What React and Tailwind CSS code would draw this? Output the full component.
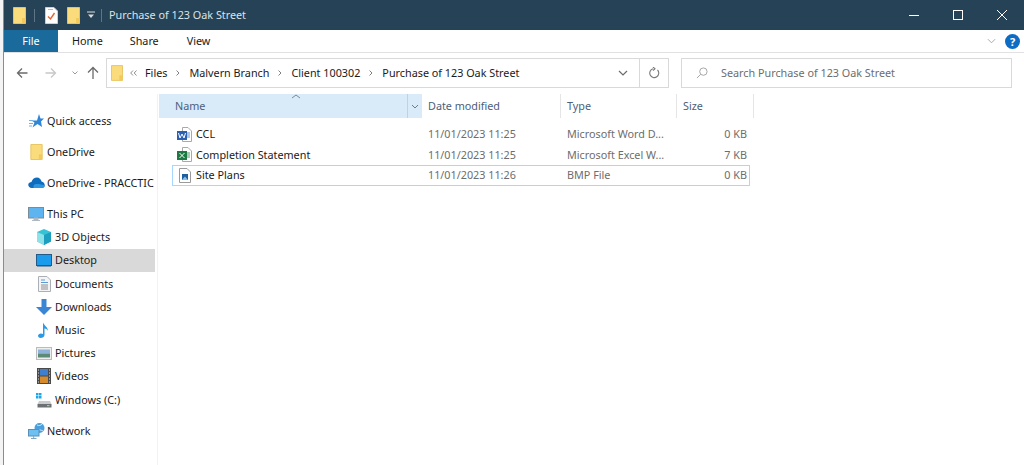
const font = { fontFamily: '"Noto Sans", sans-serif' };

function Folder({ className = "w-[13px] h-[17px]" }) {
  return (
    <svg viewBox="0 0 13 17" className={className}>
      <path d="M0.500 0.500H12.500V16.500H0.500Z" fill="#fbdc7c" stroke="#e6c25e" />
      <path d="M9 11H12.500V16.500H9Z" fill="#f3c95b" />
    </svg>
  );
}

function TaskIcon() {
  return (
    <svg viewBox="0 0 13 17" className="w-[13px] h-[17px]">
      <path d="M0.500 0.500H9L12.500 4V16.500H0.500Z" fill="#fff" stroke="#cfcfcf" />
      <path d="M3 9.500L5.500 12L9.500 6" fill="none" stroke="#e8642c" strokeWidth="1.400" />
      <path d="M3 2.500H8" stroke="#bbb" />
    </svg>
  );
}

function Star() {
  return (
    <svg viewBox="0 0 15 14" className="w-[15px] h-[14px]">
      <path d="M10 0L11.500 4.500H15L12 7.500L13 13L8.500 10L3.500 13.500L5.500 8.500L2.500 6.500H8Z" fill="#2f86d8" />
      <path d="M0 6.500H4M0 9.500H4M0 12H3" stroke="#6db2ea" />
    </svg>
  );
}

function Cloud() {
  return (
    <svg viewBox="0 0 18 12" className="w-[17px] h-[11px]">
      <path d="M4 12C1 12 0 10 0 8.500C0 6.500 2 5.500 3.500 5.500C4.500 2 7 0.500 9.500 0.500C12 0.500 14 2.500 14.500 5C16.500 5.500 18 7 18 9C18 11 16.500 12 15 12Z" fill="#0f6cbd" />
      <path d="M6 12C5 10 6 7.500 9 7.500C12 7.500 17 8 18 9.500C17.500 11 16.500 12 15 12Z" fill="#2c96e0" />
    </svg>
  );
}

function Monitor() {
  return (
    <svg viewBox="0 0 16 15" className="w-4 h-[15px]">
      <rect x="0.500" y="0.500" width="15" height="10.500" fill="#5db4ee" stroke="#7c8b98" />
      <path d="M6 11H10V13H6ZM4 13.500H12" fill="#aeb9c3" stroke="#aeb9c3" />
    </svg>
  );
}

function Cube() {
  return (
    <svg viewBox="0 0 16 16" className="w-4 h-4">
      <path d="M8 0L15 3V12.500L8 16L1 12.500V3Z" fill="#37c3d6" />
      <path d="M1 3L8 6V16L1 12.500Z" fill="#8de2e8" />
      <path d="M8 6L15 3V12.500L8 16Z" fill="#1d9fc0" />
    </svg>
  );
}

function DesktopIcon() {
  return (
    <svg viewBox="0 0 16 13" className="w-4 h-[13px]">
      <rect x="0.500" y="0.500" width="15" height="11" fill="#1a9bec" stroke="#245a88" />
      <rect x="1" y="11" width="14" height="1.500" fill="#245a88" />
    </svg>
  );
}

function Docs() {
  return (
    <svg viewBox="0 0 13 16" className="w-[13px] h-4">
      <path d="M0.500 0.500H9L12.500 4V15.500H0.500Z" fill="#f4f4f4" stroke="#aab0b6" />
      <path d="M3 4H7M3 6.500H10" stroke="#5a9ad5" />
      <path d="M3 9H10M3 11H10M3 13H10" stroke="#8a8f95" />
    </svg>
  );
}

function DownArrow() {
  return (
    <svg viewBox="0 0 16 16" className="w-4 h-4">
      <path d="M5.500 0H10.500V8H16L8 16L0 8H5.500Z" fill="#3b86d4" />
    </svg>
  );
}

function Note() {
  return (
    <svg viewBox="0 0 12 16" className="w-3 h-4">
      <path d="M5 0.500C6 3.500 10 5 10 9C9.500 7.500 8 6.500 6.500 6.500V13C6.500 15 4.500 16 2.500 16C1 16 0 15 0 13.800C0 12.500 1.500 11.500 3 11.500C3.800 11.500 4.500 11.700 5 12Z" fill="#2a9ae8" />
    </svg>
  );
}

function Pic() {
  return (
    <svg viewBox="0 0 16 13" className="w-4 h-[13px]">
      <rect x="0.500" y="0.500" width="15" height="12" fill="#eee" stroke="#bbb" />
      <rect x="2" y="2.500" width="12" height="4" fill="#8fb3d9" />
      <rect x="2" y="6.500" width="12" height="4" fill="#5d8a76" />
    </svg>
  );
}

function Film() {
  return (
    <svg viewBox="0 0 14 16" className="w-[14px] h-4">
      <rect width="14" height="16" fill="#4a4a4a" />
      <rect x="3" y="1" width="8" height="6.500" fill="#3f7fd0" />
      <rect x="3" y="8.500" width="8" height="6.500" fill="#d58a2b" />
      <path d="M1 2H2M1 5H2M1 8H2M1 11H2M1 14H2M12 2H13M12 5H13M12 8H13M12 11H13M12 14H13" stroke="#ddd" />
    </svg>
  );
}

function Drive() {
  return (
    <svg viewBox="0 0 16 16" className="w-4 h-4">
      <path d="M0 1H2.500V3.500H0ZM3 1H5.500V3.500H3ZM0 4H2.500V6.500H0ZM3 4H5.500V6.500H3Z" fill="#1ea7ea" />
      <path d="M3 9H14L15.500 12H1.500Z" fill="#c9ccce" />
      <rect x="1.500" y="12" width="14" height="3.500" fill="#6c7073" />
      <rect x="11" y="13" width="2.500" height="1.200" fill="#7fe07f" />
    </svg>
  );
}

function Net() {
  return (
    <svg viewBox="0 0 17 16" className="w-[17px] h-4">
      <circle cx="11.500" cy="5" r="5" fill="#4b9fdc" />
      <path d="M9 2C11 3 13 2.500 14 1M8 7C10 6 13 7 15 8" stroke="#cfe8fa" fill="none" />
      <rect x="0.500" y="6.500" width="10.500" height="6.500" fill="#6cc0f2" stroke="#5b8fb8" />
      <path d="M5.700 13V15.500M3 15.500H8.500" stroke="#7ea6c4" />
    </svg>
  );
}

function WordIcon() {
  return (
    <svg viewBox="0 0 15 15" className="w-[15px] h-[15px]">
      <path d="M5.500 0.500H11L14.500 4V14.500H5.500Z" fill="#fff" stroke="#a9a9a9" />
      <path d="M10 6H13M10 8H13M10 10H13" stroke="#5b8fd0" />
      <rect y="4" width="10" height="9" fill="#2b5fb3" />
      <path d="M1.500 6L3 11L5 7L7 11L8.500 6" stroke="#fff" fill="none" />
    </svg>
  );
}

function ExcelIcon() {
  return (
    <svg viewBox="0 0 15 15" className="w-[15px] h-[15px]">
      <path d="M5.500 0.500H11L14.500 4V14.500H5.500Z" fill="#fff" stroke="#a9a9a9" />
      <path d="M10 6H13M10 8H13M10 10H13" stroke="#4f9a6b" />
      <rect y="4" width="10" height="9" fill="#1d7a43" />
      <path d="M2.500 6L7.500 11M7.500 6L2.500 11" stroke="#fff" />
    </svg>
  );
}

function BmpIcon() {
  return (
    <svg viewBox="0 0 12 15" className="w-3 h-[15px]">
      <path d="M0.500 0.500H8L11.500 4V14.500H0.500Z" fill="#fff" stroke="#9a9a9a" />
      <rect x="3" y="6" width="6" height="6" fill="#1f5f9e" />
      <path d="M3 12L6 8.500L9 12Z" fill="#8cc0ea" />
    </svg>
  );
}

function Crumb() {
  return (
    <span className="w-[22px] flex justify-center shrink-0">
      <svg viewBox="0 0 4 6" className="w-1 h-[6px]">
        <path d="M0.500 0.500L3 3L0.500 5.500" fill="none" stroke="#808080" />
      </svg>
    </span>
  );
}

const sideItems = [
  { label: "Quick access", icon: <Star />, indent: false, gap: false },
  { label: "OneDrive", icon: <Folder className="w-[13px] h-4" />, indent: false, gap: true },
  { label: "OneDrive - PRACCTIC", icon: <Cloud />, indent: false, gap: true },
  { label: "This PC", icon: <Monitor />, indent: false, gap: true },
  { label: "3D Objects", icon: <Cube />, indent: true },
  { label: "Desktop", icon: <DesktopIcon />, indent: true, active: true },
  { label: "Documents", icon: <Docs />, indent: true },
  { label: "Downloads", icon: <DownArrow />, indent: true },
  { label: "Music", icon: <Note />, indent: true },
  { label: "Pictures", icon: <Pic />, indent: true },
  { label: "Videos", icon: <Film />, indent: true },
  { label: "Windows (C:)", icon: <Drive />, indent: true },
  { label: "Network", icon: <Net />, indent: false, gap: true },
];

const files = [
  { name: "CCL", date: "11/01/2023 11:25", type: "Microsoft Word D...", size: "0 KB", icon: <WordIcon /> },
  { name: "Completion Statement", date: "11/01/2023 11:25", type: "Microsoft Excel W...", size: "7 KB", icon: <ExcelIcon /> },
  { name: "Site Plans", date: "11/01/2023 11:26", type: "BMP File", size: "0 KB", icon: <BmpIcon />, selected: true },
];

function SideRow({ item }) {
  return (
    <div className={`h-[23.2px] flex items-center ${item.gap ? "mt-2" : ""} ${item.active ? "bg-[#d9d9d9]" : ""} ${item.indent ? "pl-[30px]" : "pl-[22px]"}`}>
      <span className="w-[20px] h-4 flex items-center justify-center shrink-0">{item.icon}</span>
      <span className="ml-[1px] whitespace-nowrap text-[#1a1a1a]">{item.label}</span>
    </div>
  );
}

function FileRow({ file }) {
  return (
    <div className={`h-[20.5px] w-[578px] flex items-center border ${file.selected ? "border-[#a6d8ff]" : "border-transparent"}`}>
      <span className="w-[23px] flex justify-center shrink-0">{file.icon}</span>
      <span className="w-[232px] text-[#1a1a1a] whitespace-nowrap">{file.name}</span>
      <span className="w-[139px] text-[#6d6d6d] whitespace-nowrap">{file.date}</span>
      <span className="w-[120px] text-[#6d6d6d] whitespace-nowrap">{file.type}</span>
      <span className="w-[60px] text-right text-[#6d6d6d] whitespace-nowrap">{file.size}</span>
    </div>
  );
}

export default function App() {
  return (
    <div style={font} className="w-[1024px] h-[465px] bg-white flex overflow-hidden text-[10.8px] text-[#1a1a1a]">
      <div className="w-[4px] shrink-0 bg-[#f4f4f4] border-r border-[#8c8c8c]" />
      <div className="flex-1 min-w-0 flex flex-col">
        <div className="h-[30px] bg-[#264256] flex items-center pl-[9px] shrink-0">
          <Folder />
          <span className="w-px h-[13px] bg-[#5e7585] ml-[8px]" />
          <span className="ml-[10px] flex"><TaskIcon /></span>
          <span className="ml-[9px] flex"><Folder /></span>
          <svg viewBox="0 0 8 8" className="w-2 h-2 ml-[7px]">
            <path d="M0 1H8" stroke="#ddd" />
            <path d="M1 3.500H7L4 7Z" fill="#ddd" />
          </svg>
          <span className="w-px h-[13px] bg-[#5e7585] ml-[6px]" />
          <span className="ml-[7px] text-[#dce3e8] whitespace-nowrap">Purchase of 123 Oak Street</span>
          <div className="ml-auto flex items-center">
            <div className="w-[44px] flex justify-center"><span className="w-[10px] h-px bg-white" /></div>
            <div className="w-[44px] flex justify-center"><span className="w-[10px] h-[10px] border border-white" /></div>
            <div className="w-[44px] flex justify-center">
              <svg viewBox="0 0 10 10" className="w-[10px] h-[10px]">
                <path d="M0 0L10 10M10 0L0 10" stroke="#fff" />
              </svg>
            </div>
          </div>
        </div>

        <div className="h-[23px] flex items-center border-b border-[#e1e1e1] shrink-0">
          <div className="w-[54px] h-full bg-[#1a6a9c] text-white flex items-center justify-center">File</div>
          <div className="ml-[14px]">Home</div>
          <div className="ml-[27px]">Share</div>
          <div className="ml-[28px]">View</div>
          <div className="ml-auto flex items-center pr-[4px]">
            <svg viewBox="0 0 10 6" className="w-[9px] h-[6px] mr-[9px]">
              <path d="M1 1L5 5L9 1" fill="none" stroke="#a0a0a0" />
            </svg>
            <span className="w-[15px] h-[15px] rounded-full bg-[#0f6cc4] text-white text-[11px] font-bold flex items-center justify-center leading-none">?</span>
          </div>
        </div>

        <div className="h-[41px] pb-px flex items-center shrink-0">
          <svg viewBox="0 0 12 12" className="w-3 h-3 ml-[12px]">
            <path d="M11.500 6H1.500M6 1.500L1.500 6L6 10.500" fill="none" stroke="#6b6b6b" strokeWidth="1.300" />
          </svg>
          <svg viewBox="0 0 12 12" className="w-3 h-3 ml-[17px]">
            <path d="M0.500 6H10.500M6 1.500L10.500 6L6 10.500" fill="none" stroke="#c8c8c8" strokeWidth="1.300" />
          </svg>
          <svg viewBox="0 0 6 4" className="w-[6px] h-1 ml-[15px]">
            <path d="M0.500 0.500L3 3L5.500 0.500" fill="none" stroke="#9a9a9a" />
          </svg>
          <svg viewBox="0 0 12 14" className="w-3 h-[14px] ml-[9px]">
            <path d="M6 13V2M1 6.500L6 1.500L11 6.500" fill="none" stroke="#6b6b6b" strokeWidth="1.300" />
          </svg>
          <div className="ml-[7px] w-[563px] h-[30px] border border-[#d9d9d9] flex items-center pl-[4px]">
            <Folder className="w-[12px] h-[16px]" />
            <svg viewBox="0 0 7 6" className="w-[7px] h-[6px] ml-[7px]">
              <path d="M3 0.500L0.700 3L3 5.500M6.500 0.500L4.200 3L6.500 5.500" fill="none" stroke="#909090" />
            </svg>
            <span className="ml-[8px]">Files</span>
            <Crumb />
            <span>Malvern Branch</span>
            <Crumb />
            <span>Client 100302</span>
            <Crumb />
            <span>Purchase of 123 Oak Street</span>
            <svg viewBox="0 0 10 6" className="w-[10px] h-[6px] ml-auto mr-[11px]">
              <path d="M1 1L5 5L9 1" fill="none" stroke="#6b6b6b" strokeWidth="1.200" />
            </svg>
            <div className="w-[29px] h-full border-l border-[#d9d9d9] flex items-center justify-center">
              <svg viewBox="0 0 12 12" className="w-3 h-3">
                <path d="M9.500 3A4.500 4.500 0 1 1 5 1.800M5 0L7 1.800L5 3.500" fill="none" stroke="#7a7a7a" strokeWidth="1.100" />
              </svg>
            </div>
          </div>
          <div className="ml-[12px] w-[331px] h-[30px] border border-[#d9d9d9] flex items-center pl-[14px] text-[#6d6d6d]">
            <svg viewBox="0 0 13 13" className="w-[12px] h-[12px]">
              <circle cx="8" cy="5" r="4" fill="none" stroke="#a0a0a0" />
              <path d="M5 8L1 12" stroke="#a0a0a0" />
            </svg>
            <span className="ml-[13px] whitespace-nowrap">Search Purchase of 123 Oak Street</span>
          </div>
        </div>

        <div className="flex-1 flex min-h-0">
          <div className="w-[154px] shrink-0 border-r border-[#f2f2f2] pt-[15px] mr-px">
            <div className="w-[151px]">
              {sideItems.map((item) => (
                <SideRow key={item.label} item={item} />
              ))}
            </div>
          </div>
          <div className="flex-1 min-w-0">
            <div className="h-[24px] flex items-center text-[#4c607a] relative">
              <div className="w-[248px] h-full bg-[#d9ebf9] flex items-center pl-[16px]">Name</div>
              <div className="w-[15px] h-full bg-[#d9ebf9] border-l border-[#bcd3e6] flex items-center justify-center">
                <svg viewBox="0 0 8 5" className="w-2 h-[5px]">
                  <path d="M1 1L4 4L7 1" fill="none" stroke="#6b7d8c" />
                </svg>
              </div>
              <div className="w-[139px] h-full flex items-center pl-[6px] border-r border-[#e5e5e5]">Date modified</div>
              <div className="w-[116px] h-full flex items-center pl-[6px] border-r border-[#e5e5e5]">Type</div>
              <div className="w-[77px] h-full flex items-center pl-[6px] border-r border-[#e5e5e5]">Size</div>
              <svg viewBox="0 0 10 5" className="absolute left-[132px] top-0 w-[10px] h-[5px]">
                <path d="M1 4L5 1L9 4" fill="none" stroke="#7a8a98" />
              </svg>
            </div>
            <div className="pt-[6px] pl-[13px]">
              {files.map((file) => (
                <FileRow key={file.name} file={file} />
              ))}
            </div>
          </div>
        </div>
      </div>
    </div>
  );
}
